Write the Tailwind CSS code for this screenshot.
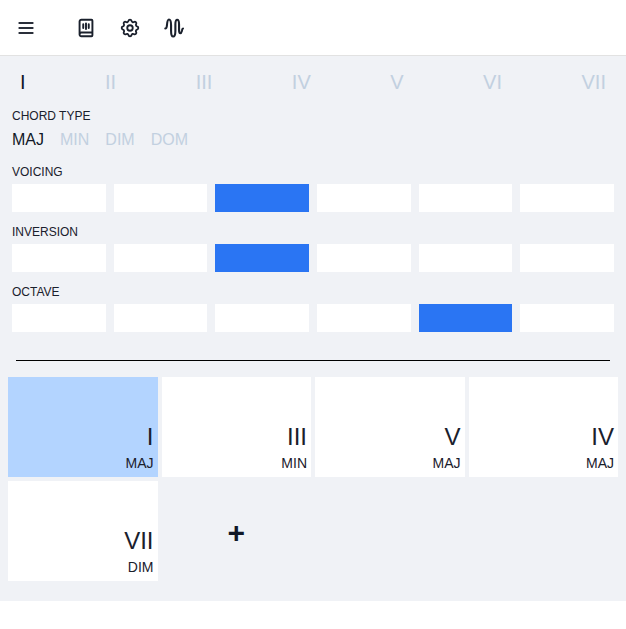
<!DOCTYPE html>
<html><head><meta charset="utf-8"><script src="https://cdn.jsdelivr.net/npm/@tailwindcss/browser@4"></script></head>
<body class="bg-white font-['Liberation_Sans',Arial,sans-serif] text-[#1a202c]">
<header class="h-14 border-b border-[#e2e2e2] flex items-center bg-white">
  <button class="ml-[16px] w-5 h-5 flex"><svg width="20" height="20" viewBox="0 0 24 24" fill="none" stroke="#2a2f3a" stroke-width="2.4" stroke-linecap="round"><path d="M4 6h16M4 12h16M4 18h16"/></svg></button>
  <div class="ml-[39px] flex gap-[22px]">
    <svg width="22" height="22" viewBox="0 0 24 24" fill="none" stroke="#1a202c" stroke-width="2.100" stroke-linecap="round" stroke-linejoin="round"><path d="M5 19V5a2 2 0 0 1 2-2h11a1 1 0 0 1 1 1v16a1 1 0 0 1-1 1H7a2 2 0 0 1-2-2Zm0 0a2 2 0 0 1 2-2h12"/><path d="M9 8v4M12 7v6M15 8v4"/></svg>
    <svg width="22" height="22" viewBox="0 0 24 24" fill="none" stroke="#1a202c" stroke-width="2" stroke-linecap="round" stroke-linejoin="round"><path d="M10.3 4.3c.4-1.800 3-1.800 3.400 0a1.700 1.700 0 0 0 2.600 1.100c1.500-.9 3.300.8 2.400 2.400a1.700 1.700 0 0 0 1 2.500c1.800.4 1.800 3 0 3.400a1.700 1.700 0 0 0-1 2.600c.9 1.500-.9 3.300-2.400 2.400a1.700 1.700 0 0 0-2.600 1c-.4 1.800-3 1.800-3.400 0a1.700 1.700 0 0 0-2.600-1c-1.500.9-3.300-.9-2.400-2.400a1.700 1.700 0 0 0-1-2.600c-1.800-.4-1.800-3 0-3.400a1.700 1.700 0 0 0 1-2.500c-.9-1.600.9-3.300 2.400-2.400a1.700 1.700 0 0 0 2.600-1.100Z"/><circle cx="12" cy="12" r="3"/></svg>
    <svg width="22" height="22" viewBox="0 0 24 24" fill="none" stroke="#1a202c" stroke-width="2.300" stroke-linecap="round" stroke-linejoin="round"><path d="M2.500 12.500c1.200 0 1.600-1 1.800-3.500C4.600 5 5 2.800 6.500 2.800S8.800 5 8.800 9v6c0 4 .7 6.300 2.300 6.300s2.400-2.300 2.400-6.300V8c0-3 .6-5 2-5s2 2 2 5v6c0 2 .3 3.800 1.400 3.800S20.300 16 20.600 15c.3-1.500.7-2.500 1.200-2.500"/></svg>
  </div>
</header>
<main class="bg-[#f0f2f6] h-[545px] pt-[12px]">
  <div class="flex justify-between px-5 text-xl leading-[28px] text-[#c2d0e0]">
    <span class="text-[#111827]">I</span><span>II</span><span>III</span><span>IV</span><span>V</span><span>VI</span><span>VII</span>
  </div>
  <section class="px-3 mt-[12px]">
    <div class="text-xs leading-4">CHORD TYPE</div>
    <div class="flex gap-[16px] mt-[4px] text-base leading-6 text-[#c2d0e0]"><span class="text-[#111827]">MAJ</span><span>MIN</span><span>DIM</span><span>DOM</span></div>
    <div class="text-xs leading-4 mt-3">VOICING</div>
    <div class="grid grid-cols-6 gap-2 mt-1"><div class="h-7 bg-white"></div><div class="h-7 bg-white"></div><div class="h-7 bg-[#2a75f3]"></div><div class="h-7 bg-white"></div><div class="h-7 bg-white"></div><div class="h-7 bg-white"></div></div>
    <div class="text-xs leading-4 mt-3">INVERSION</div>
    <div class="grid grid-cols-6 gap-2 mt-1"><div class="h-7 bg-white"></div><div class="h-7 bg-white"></div><div class="h-7 bg-[#2a75f3]"></div><div class="h-7 bg-white"></div><div class="h-7 bg-white"></div><div class="h-7 bg-white"></div></div>
    <div class="text-xs leading-4 mt-3">OCTAVE</div>
    <div class="grid grid-cols-6 gap-2 mt-1"><div class="h-7 bg-white"></div><div class="h-7 bg-white"></div><div class="h-7 bg-white"></div><div class="h-7 bg-white"></div><div class="h-7 bg-[#2a75f3]"></div><div class="h-7 bg-white"></div></div>
  </section>
  <hr class="mx-4 mt-7 border-t border-black">
  <div class="grid grid-cols-4 gap-1 px-2 mt-4">
    <div class="h-[100px] bg-[#b3d4ff] flex flex-col items-end justify-end pr-1 pb-1"><div class="text-2xl leading-8">I</div><div class="text-sm leading-5">MAJ</div></div>
    <div class="h-[100px] bg-white flex flex-col items-end justify-end pr-1 pb-1"><div class="text-2xl leading-8">III</div><div class="text-sm leading-5">MIN</div></div>
    <div class="h-[100px] bg-white flex flex-col items-end justify-end pr-1 pb-1"><div class="text-2xl leading-8">V</div><div class="text-sm leading-5">MAJ</div></div>
    <div class="h-[100px] bg-white flex flex-col items-end justify-end pr-1 pb-1"><div class="text-2xl leading-8">IV</div><div class="text-sm leading-5">MAJ</div></div>
    <div class="h-[100px] bg-white flex flex-col items-end justify-end pr-1 pb-1"><div class="text-2xl leading-8">VII</div><div class="text-sm leading-5">DIM</div></div>
    <div class="h-[100px] flex items-center justify-center text-3xl font-bold pt-1 text-[#111827]">+</div>
  </div>
</main>
</body></html>
